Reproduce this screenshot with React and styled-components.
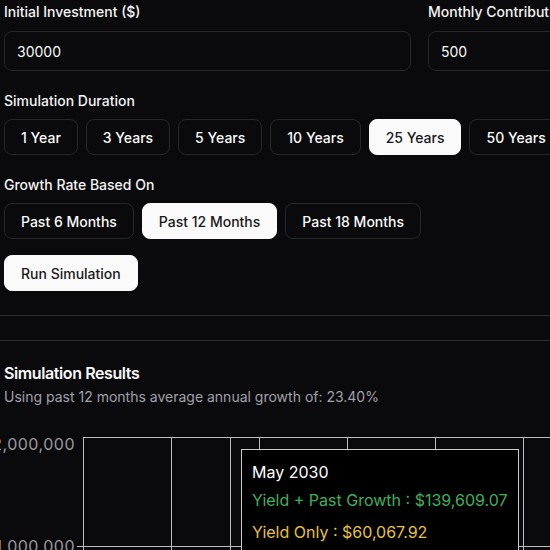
import React from "react";
import styled, { createGlobalStyle } from "styled-components";

const GlobalStyle = createGlobalStyle`
  html, body {
    margin: 0;
    padding: 0;
    background: #0a0a0c;
    overflow: hidden;
  }
  body {
    font-family: Inter, "Noto Sans", "Liberation Sans", sans-serif;
    color: #fafafa;
  }
  * { box-sizing: border-box; }
`;

const Page = styled.div`
  width: 840px;
  padding: 2px 4px 0 4px;
  display: flex;
  flex-direction: column;
`;

const FieldGrid = styled.div`
  display: grid;
  grid-template-columns: 407px 407px;
  column-gap: 17px;
`;

const Field = styled.div`
  display: flex;
  flex-direction: column;
  gap: 9px;
`;

const Label = styled.div`
  font-size: 14px;
  line-height: 20px;
  font-weight: 500;
  color: #f4f4f5;
`;

const Input = styled.input`
  height: 40px;
  width: 100%;
  padding: 0 12px;
  border: 1px solid #27272a;
  border-radius: 8px;
  background: #0a0a0c;
  color: #fafafa;
  font-family: inherit;
  font-size: 14px;
  outline: none;
`;

const Section = styled.div`
  display: flex;
  flex-direction: column;
  gap: 8px;
  margin-top: 20px;
`;

const OptionRow = styled.div`
  display: flex;
  gap: 8px;
`;

const OptionButton = styled.button`
  height: 36px;
  padding: 0 16px;
  border-radius: 8px;
  border: 1px solid ${(p) => (p.$active ? "#fafafa" : "#27272a")};
  background: ${(p) => (p.$active ? "#fafafa" : "#0a0a0c")};
  color: ${(p) => (p.$active ? "#18181b" : "#fafafa")};
  font-family: inherit;
  font-size: 14px;
  font-weight: 500;
  white-space: nowrap;
  cursor: pointer;
`;

const RunButton = styled(OptionButton)`
  align-self: flex-start;
  margin-top: 16px;
`;

const Divider = styled.div`
  height: 1px;
  background: #323236;
  margin: 24px -4px 0 -4px;
`;

const Results = styled.div`
  display: flex;
  flex-direction: column;
  margin-top: 20px;
`;

const Title = styled.div`
  font-size: 16px;
  line-height: 24px;
  font-weight: 600;
  letter-spacing: -0.4px;
  color: #fafafa;
`;

const Subtitle = styled.div`
  font-size: 14px;
  line-height: 20px;
  color: #a1a1aa;
  margin-top: 2px;
`;

const ChartWrap = styled.div`
  position: relative;
  margin: 20px 0 0 -4px;
  height: 140px;
`;

const ChartSvg = styled.svg`
  display: block;
  overflow: visible;
`;

const TooltipBox = styled.div`
  position: absolute;
  left: 241px;
  top: 22px;
  padding: 10px;
  background: #000;
  border: 1px solid #cccccc;
  white-space: nowrap;
  font-size: 16px;
  line-height: 24px;
`;

const TooltipLabel = styled.div`
  color: #ffffff;
`;

const TooltipItem = styled.div`
  padding: 4px 0;
  color: ${(p) => p.$color};
`;

const durations = ["1 Year", "3 Years", "5 Years", "10 Years", "25 Years", "50 Years"];
const growths = ["Past 6 Months", "Past 12 Months", "Past 18 Months"];

const gridX = [83, 171, 230, 259, 347, 435, 523, 611, 699, 787];
const GRID = "#bdbdbd";

function Chart() {
  return (
    <ChartSvg width="844" height="140">
      <line x1="83" y1="10.5" x2="844" y2="10.5" stroke={GRID} strokeWidth="1" />
      <line x1="77" y1="119.5" x2="844" y2="119.5" stroke={GRID} strokeWidth="1" />
      {gridX.map((x) => (
        <line key={x} x1={x + 0.5} y1="10" x2={x + 0.5} y2="140" stroke={GRID} strokeWidth="1" />
      ))}
      <text
        x="75"
        y="17"
        textAnchor="end"
        dominantBaseline="central"
        fill="#9a9a9e"
        fontSize="16"
        letterSpacing="0.5"
        fontFamily="Inter, sans-serif"
      >
        2,000,000
      </text>
      <text
        x="75"
        y="119"
        textAnchor="end"
        dominantBaseline="central"
        fill="#9a9a9e"
        fontSize="16"
        letterSpacing="0.5"
        fontFamily="Inter, sans-serif"
      >
        1,000,000
      </text>
    </ChartSvg>
  );
}

export default function App() {
  return (
    <>
      <GlobalStyle />
      <Page>
        <FieldGrid>
          <Field>
            <Label>Initial Investment ($)</Label>
            <Input defaultValue="30000" />
          </Field>
          <Field>
            <Label>Monthly Contribution ($)</Label>
            <Input defaultValue="500" />
          </Field>
        </FieldGrid>

        <Section>
          <Label>Simulation Duration</Label>
          <OptionRow>
            {durations.map((d) => (
              <OptionButton key={d} $active={d === "25 Years"}>
                {d}
              </OptionButton>
            ))}
          </OptionRow>
        </Section>

        <Section>
          <Label>Growth Rate Based On</Label>
          <OptionRow>
            {growths.map((g) => (
              <OptionButton key={g} $active={g === "Past 12 Months"}>
                {g}
              </OptionButton>
            ))}
          </OptionRow>
        </Section>

        <RunButton $active>Run Simulation</RunButton>

        <Divider />
        <Divider />

        <Results>
          <Title>Simulation Results</Title>
          <Subtitle>Using past 12 months average annual growth of: 23.40%</Subtitle>
          <ChartWrap>
            <Chart />
            <TooltipBox>
              <TooltipLabel>May 2030</TooltipLabel>
              <TooltipItem $color="#3fb05c">Yield + Past Growth : $139,609.07</TooltipItem>
              <TooltipItem $color="#e8c23e">Yield Only : $60,067.92</TooltipItem>
            </TooltipBox>
          </ChartWrap>
        </Results>
      </Page>
    </>
  );
}
